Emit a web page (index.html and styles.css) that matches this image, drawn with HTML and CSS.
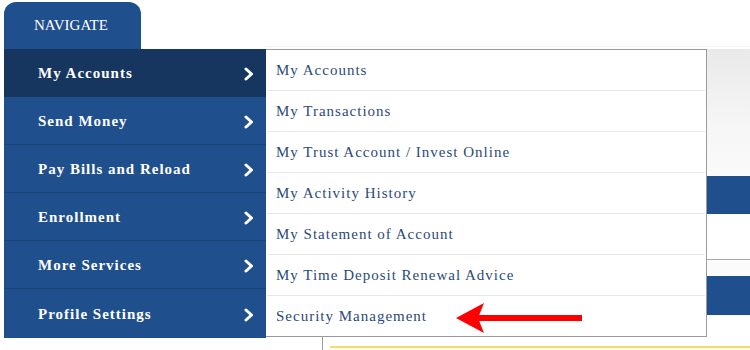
FILE: index.html
```html
<!DOCTYPE html>
<html>
<head>
<meta charset="utf-8">
<link rel="stylesheet" href="styles.css">
</head>
<body>
<div class="page">
  <aside class="sidebar">
    <div class="tab">NAVIGATE</div>
    <ul class="menu">
      <li class="item active">
        <span>My Accounts</span>
        <svg class="chev" width="10" height="14" viewBox="0 0 10 14"><polyline points="2,2 7.5,7 2,12" fill="none" stroke="#fff" stroke-width="3" stroke-linecap="round" stroke-linejoin="round"/></svg>
        <ul class="dropdown">
          <li>My Accounts</li>
          <li>My Transactions</li>
          <li>My Trust Account / Invest Online</li>
          <li>My Activity History</li>
          <li>My Statement of Account</li>
          <li>My Time Deposit Renewal Advice</li>
          <li class="last">Security Management
            <svg class="arrow" width="130" height="32" viewBox="0 0 130 32"><polygon points="2,15 30,0 24,15 30,30" fill="#f00"/><rect x="22" y="12" width="106" height="6" fill="#f00"/></svg>
          </li>
        </ul>
      </li>
      <li class="item"><span>Send Money</span><svg class="chev" width="10" height="14" viewBox="0 0 10 14"><polyline points="2,2 7.5,7 2,12" fill="none" stroke="#fff" stroke-width="3" stroke-linecap="round" stroke-linejoin="round"/></svg></li>
      <li class="item"><span>Pay Bills and Reload</span><svg class="chev" width="10" height="14" viewBox="0 0 10 14"><polyline points="2,2 7.5,7 2,12" fill="none" stroke="#fff" stroke-width="3" stroke-linecap="round" stroke-linejoin="round"/></svg></li>
      <li class="item"><span>Enrollment</span><svg class="chev" width="10" height="14" viewBox="0 0 10 14"><polyline points="2,2 7.5,7 2,12" fill="none" stroke="#fff" stroke-width="3" stroke-linecap="round" stroke-linejoin="round"/></svg></li>
      <li class="item"><span>More Services</span><svg class="chev" width="10" height="14" viewBox="0 0 10 14"><polyline points="2,2 7.5,7 2,12" fill="none" stroke="#fff" stroke-width="3" stroke-linecap="round" stroke-linejoin="round"/></svg></li>
      <li class="item"><span>Profile Settings</span><svg class="chev" width="10" height="14" viewBox="0 0 10 14"><polyline points="2,2 7.5,7 2,12" fill="none" stroke="#fff" stroke-width="3" stroke-linecap="round" stroke-linejoin="round"/></svg></li>
    </ul>
  </aside>
  <main class="content">
    <div class="topline"></div>
    <div class="banner"></div>
    <div class="bar"></div>
    <div class="gap-a"></div>
    <div class="gap-b"></div>
    <div class="bar bar2"></div>
    <div class="gap-c"></div>
    <div class="lower">
      <div class="panel"><div class="notice"></div></div>
    </div>
  </main>
</div>
</body>
</html>
```

FILE: styles.css
```css
html, body {
  margin: 0;
  padding: 0;
  background: #fff;
  width: 750px;
  height: 350px;
  overflow: hidden;
}
.page {
  display: flex;
  font-family: "Liberation Serif", "Times New Roman", serif;
}
.sidebar {
  margin-left: 4px;
  width: 262px;
  flex: none;
  position: relative;
  z-index: 2;
}
.tab {
  margin-top: 2px;
  width: 137px;
  height: 47px;
  box-sizing: border-box;
  background: #1f4f8c;
  border-radius: 12px 12px 0 0;
  color: #fff;
  font-size: 15px;
  padding-left: 30px;
  line-height: 47px;
}
.menu {
  list-style: none;
  margin: 0;
  padding: 0;
  background: #1f4f8c;
}
.item {
  position: relative;
  height: 47px;
  box-sizing: border-box;
  padding: 2px 12px 0 34px;
  border-bottom: 1px solid #1a4274;
  display: flex;
  align-items: center;
  justify-content: space-between;
  color: #fff;
  font-weight: bold;
  font-size: 15px;
  letter-spacing: 1px;
  height: 48px;
}
.item:last-child {
  height: 49px;
  border-bottom: none;
}
.item.active {
  background: #17365f;
  border-bottom-color: #17365f;
}
.chev {
  display: block;
}
.dropdown {
  position: absolute;
  left: 262px;
  top: 0;
  width: 438px;
  margin: 0;
  padding: 0 1px;
  list-style: none;
  background: #fff;
  border: 1px solid #9a9a9a;
  border-left: none;
  box-sizing: content-box;
}
.dropdown li {
  height: 40px;
  line-height: 40px;
  border-bottom: 1px solid #e8e8e8;
  padding-left: 9px;
  color: #2c4a78;
  font-weight: normal;
  font-size: 15px;
  letter-spacing: 1px;
  position: relative;
}
.dropdown li.last {
  border-bottom: none;
}
.arrow {
  position: absolute;
  left: 187px;
  top: 7px;
}
.content {
  flex: 1;
  display: flex;
  flex-direction: column;
}
.topline {
  height: 46px;
  border-bottom: 1px solid #f2f2f2;
  margin-bottom: 2px;
}
.banner {
  height: 127px;
  background: linear-gradient(180deg, #e9e9e9 0%, #f6f6f6 60%, #fafafa 100%);
}
.bar {
  height: 38px;
  background: #1f4f8c;
}
.gap-a {
  height: 45px;
  border-bottom: 1px solid #a8a8a8;
}
.gap-b {
  height: 16px;
  background: #fbfbfb;
}
.bar2 {
  height: 39px;
}
.gap-c {
  height: 22px;
}
.lower {
  padding-left: 56px;
}
.panel {
  height: 20px;
  border-left: 1px solid #9a9a9a;
  padding-left: 7px;
  padding-top: 9px;
}
.notice {
  height: 10px;
  border-top: 2px solid #eedd77;
  background: #fffbe8;
}
```
